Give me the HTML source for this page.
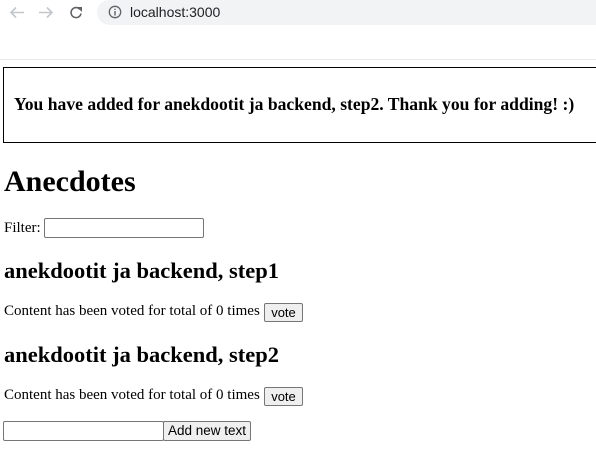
<!DOCTYPE html>
<html><head><style>
body{margin:0;width:596px;height:468px;overflow:hidden;background:#fff;font-family:"Liberation Serif",serif;color:#000;position:relative}
.a{position:absolute;white-space:nowrap}
.btn{position:absolute;background:#efefef;border:1px solid #767676;border-radius:2px;font:13px "Liberation Sans",sans-serif;text-align:center;box-sizing:border-box}
.inp{position:absolute;border:1px solid #767676;border-radius:2px;box-sizing:border-box;background:#fff}
</style></head><body>
<div class="a" style="left:0;top:0;width:596px;height:25px;background:#fff"></div>
<div class="a" style="left:97px;top:0;width:520px;height:25px;background:#f1f3f4;border-radius:13px"></div>
<svg class="a" style="left:8px;top:4px" width="90" height="17" viewBox="0 0 90 17">
<path d="M16 8.5H3M8 3.5L3 8.5L8 13.5" stroke="#c4c7ca" stroke-width="1.6" fill="none"/>
<path d="M31 8.5H44M39 3.5L44 8.5L39 13.5" stroke="#c4c7ca" stroke-width="1.6" fill="none"/>
<path d="M72 5.5A5 5 0 1 0 73 9.5" stroke="#5f6368" stroke-width="1.6" fill="none"/>
<path d="M69 3H74V8Z" fill="#5f6368"/>
</svg>
<svg class="a" style="left:108px;top:5px" width="14" height="14" viewBox="0 0 14 14"><circle cx="7" cy="7" r="5.7" stroke="#5f6368" stroke-width="1.3" fill="none"/><path d="M7 6V10.5M7 3.8V5" stroke="#5f6368" stroke-width="1.4"/></svg>
<div class="a" style="left:130px;top:4px;font:14px 'Liberation Sans',sans-serif;color:#202124">localhost:3000</div>
<div class="a" style="left:0;top:59px;width:596px;height:1px;background:#e8e8e8"></div>
<div class="a" style="left:3px;top:67px;width:600px;height:76px;border:1px solid #000;box-sizing:border-box"></div>
<div class="a" style="left:14px;top:94px;font-weight:bold;font-size:17.6px">You have added for anekdootit ja backend, step2. Thank you for adding! :)</div>
<div class="a" style="left:4px;top:165px;font-weight:bold;font-size:30px">Anecdotes</div>
<div class="a" style="left:4px;top:220px;font-size:15px">Filter:</div>
<div class="inp" style="left:44px;top:218px;width:160px;height:20px"></div>
<div class="a" style="left:4px;top:258px;font-weight:bold;font-size:22.5px">anekdootit ja backend, step1</div>
<div class="a" style="left:4px;top:303px;font-size:15px">Content has been voted for total of 0 times</div>
<div class="btn" style="left:264px;top:303px;width:39px;height:19px;line-height:17px">vote</div>
<div class="a" style="left:4px;top:342px;font-weight:bold;font-size:22.5px">anekdootit ja backend, step2</div>
<div class="a" style="left:4px;top:387px;font-size:15px">Content has been voted for total of 0 times</div>
<div class="btn" style="left:264px;top:387px;width:39px;height:19px;line-height:17px">vote</div>
<div class="inp" style="left:3px;top:421px;width:161px;height:20px"></div>
<div class="btn" style="left:163px;top:421px;width:88px;height:20px;line-height:18px;font-size:13.5px">Add new text</div>
</body></html>
